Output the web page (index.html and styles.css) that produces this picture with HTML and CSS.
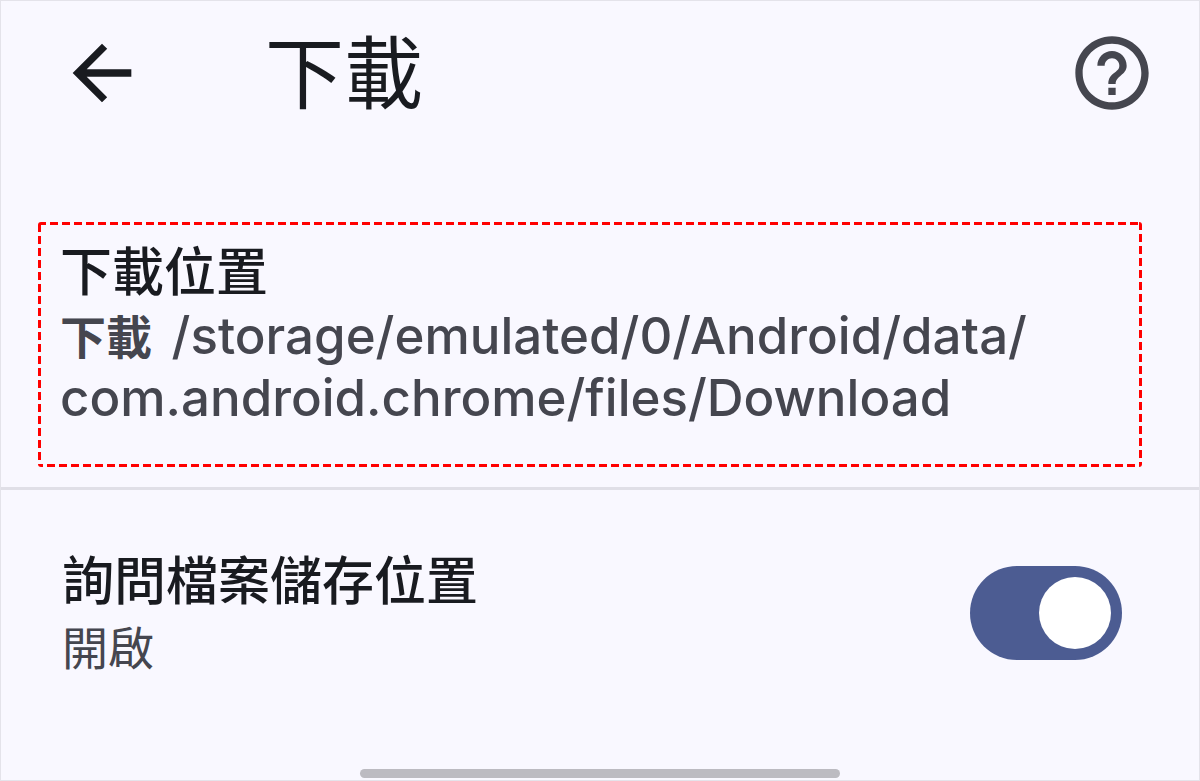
FILE: index.html
```
<!DOCTYPE html>
<html lang="zh-Hant">
  <head>
    <meta charset="UTF-8" />
    <meta name="viewport" content="width=device-width, initial-scale=1" />
    <title>下載</title>
    <link rel="stylesheet" href="styles.css">
  </head>
  <body>
    <header class="header">
      <button class="icon-btn back" type="button" aria-label="返回">
        <svg viewBox="0 0 24 24"><path d="M20 11H7.83l5.59-5.59L12 4l-8 8 8 8 1.41-1.41L7.83 13H20v-2z" /></svg>
      </button>
      <h1>下載</h1>
      <button class="icon-btn help" type="button" aria-label="說明">
        <svg viewBox="0 0 24 24"><path d="M11 18h2v-2h-2v2zm1-16C6.48 2 2 6.48 2 12s4.48 10 10 10 10-4.48 10-10S17.52 2 12 2zm0 18c-4.41 0-8-3.59-8-8s3.59-8 8-8 8 3.59 8 8-3.59 8-8 8zm0-14c-2.21 0-4 1.79-4 4h2c0-1.1.9-2 2-2s2 .9 2 2c0 2-3 1.75-3 5h2c0-2.25 3-2.5 3-5 0-2.21-1.79-4-4-4z" /></svg>
      </button>
    </header>

    <main class="settings">
      <!-- 下載位置 -->
      <section class="location">
        <svg class="outline"><rect x="0" y="0" width="100%" height="100%" /></svg>
        <h2>下載位置</h2>
        <p class="path"><span class="folder">下載</span> /storage/emulated/0/Android/data/<wbr>com.android.chrome/files/Download</p>
      </section>

      <!-- 詢問開關 -->
      <section class="ask">
        <label class="ask-text" for="ask">
          <span class="ask-title">詢問檔案儲存位置</span>
          <span class="ask-state">開啟</span>
        </label>
        <input class="switch" id="ask" type="checkbox" role="switch" checked />
      </section>
    </main>

    <div class="home-bar"></div>
  </body>
</html>
```
FILE: styles.css
```
* {
  box-sizing: border-box;
}

body {
  display: flex;
  flex-direction: column;
  min-height: 100vh;
  margin: 0;
  border: 1px solid #e4e3ea;
  background-color: #f9f8ff;
  color: #191b20;
  font-family: Inter, "Noto Sans CJK TC", sans-serif;
}

h1,
h2,
p {
  margin: 0;
}

.header {
  display: flex;
  align-items: center;
  padding: 12px 43px 0 57px;
}

.header h1 {
  flex: 1;
  margin-left: 119px;
  padding-top: 2px;
  font-size: 79px;
  line-height: 118px;
  font-weight: 400;
}

.icon-btn {
  width: 88px;
  height: 88px;
  padding: 0;
  border: none;
  background: none;
  color: #191b20;
}

.icon-btn svg {
  display: block;
  width: 100%;
  height: 100%;
  fill: currentColor;
}

.help {
  color: #45464f;
}

.location {
  position: relative;
  margin: 89px 57px 0 37px;
  padding: 19px 22px 38px;
}

/* 紅色虛線框, 外側一半會被裁掉, 實際寬 3px */
.outline {
  position: absolute;
  top: 0;
  left: 0;
  width: 100%;
  height: 100%;
  border-radius: 3px;
  overflow: hidden;
}

.outline rect {
  fill: none;
  stroke: #f00;
  stroke-width: 6;
  stroke-dasharray: 8 4;
}

.location h2,
.ask-title {
  font-size: 52px;
  line-height: 64px;
  font-weight: 500;
}

.path {
  color: #45464f;
  font-size: 51px;
  line-height: 62px;
  font-weight: 500;
}

.folder {
  margin-right: 6px;
  font-size: 46px;
  line-height: 46px;
  font-weight: 700;
}

.ask {
  display: flex;
  align-items: center;
  justify-content: space-between;
  margin-top: 20px;
  padding: 54px 77px 40px 61px;
  border-top: 3px solid #e0dfe7;
}

.ask-text {
  display: flex;
  flex-direction: column;
  padding-top: 6px;
}

.ask-state {
  color: #45464f;
  font-size: 46px;
  line-height: 68px;
}

.switch {
  flex: none;
  width: 152px;
  height: 94px;
  margin: 0;
  padding: 11px;
  border-radius: 47px;
  background-color: #8b8d98;
  appearance: none;
}

.switch::before {
  content: "";
  display: block;
  width: 72px;
  height: 72px;
  border-radius: 50%;
  background-color: #fff;
}

.switch:checked {
  background-color: #4c5c92;
}

.switch:checked::before {
  margin-left: auto;
}

.home-bar {
  width: 40%;
  height: 9px;
  margin: auto auto 2px;
  border-radius: 5px;
  background-color: #bcbbc1;
}
```
